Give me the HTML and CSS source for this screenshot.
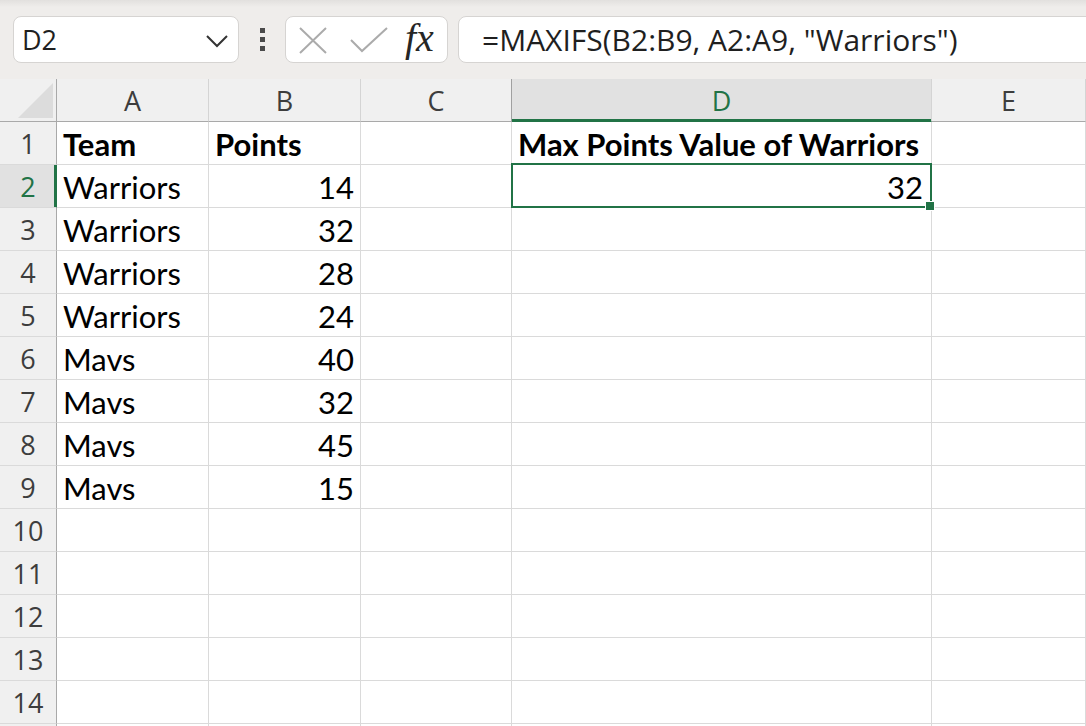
FILE: index.html
```html
<!DOCTYPE html>
<html lang="en">
<head>
<meta charset="utf-8">
<title>MAXIFS</title>
<link rel="stylesheet" href="styles.css">
</head>
<body>
<div class="toolbar">
  <div class="namebox">
    <span class="name">D2</span>
    <svg class="chev" width="24" height="14" viewBox="0 0 24 14"><path d="M2 2 L12 12 L22 2" fill="none" stroke="#333" stroke-width="2"/></svg>
  </div>
  <div class="dots"><i></i><i></i><i></i></div>
  <div class="fxbox">
    <svg class="ico-x" width="30" height="27" viewBox="0 0 30 27"><path d="M2 1 L28 26 M28 1 L2 26" fill="none" stroke="#ababab" stroke-width="2"/></svg>
    <svg class="ico-check" width="38" height="26" viewBox="0 0 38 26"><path d="M1 13 L12 24 L37 1" fill="none" stroke="#ababab" stroke-width="2"/></svg>
    <span class="fx">fx</span>
  </div>
  <div class="formula">=MAXIFS(B2:B9, A2:A9, "Warriors")</div>
</div>

<div class="sheet">
  <div class="corner"><svg width="57" height="43" viewBox="0 0 57 43"><polygon points="53,4 53,39 18,39" fill="#dcdcdc"/></svg></div>
  <div class="ch">A</div><div class="ch">B</div><div class="ch pre-sel">C</div><div class="ch sel">D</div><div class="ch">E</div>

  <div class="rh">1</div><div class="c b">Team</div><div class="c b">Points</div><div class="c"></div><div class="c b">Max Points Value of Warriors</div><div class="c"></div>
  <div class="rh sel">2</div><div class="c">Warriors</div><div class="c n">14</div><div class="c"></div><div class="c n active">32<span class="selbox"></span><span class="handle"></span></div><div class="c"></div>
  <div class="rh">3</div><div class="c">Warriors</div><div class="c n">32</div><div class="c"></div><div class="c"></div><div class="c"></div>
  <div class="rh">4</div><div class="c">Warriors</div><div class="c n">28</div><div class="c"></div><div class="c"></div><div class="c"></div>
  <div class="rh">5</div><div class="c">Warriors</div><div class="c n">24</div><div class="c"></div><div class="c"></div><div class="c"></div>
  <div class="rh">6</div><div class="c">Mavs</div><div class="c n">40</div><div class="c"></div><div class="c"></div><div class="c"></div>
  <div class="rh">7</div><div class="c">Mavs</div><div class="c n">32</div><div class="c"></div><div class="c"></div><div class="c"></div>
  <div class="rh">8</div><div class="c">Mavs</div><div class="c n">45</div><div class="c"></div><div class="c"></div><div class="c"></div>
  <div class="rh">9</div><div class="c">Mavs</div><div class="c n">15</div><div class="c"></div><div class="c"></div><div class="c"></div>
  <div class="rh">10</div><div class="c"></div><div class="c"></div><div class="c"></div><div class="c"></div><div class="c"></div>
  <div class="rh">11</div><div class="c"></div><div class="c"></div><div class="c"></div><div class="c"></div><div class="c"></div>
  <div class="rh">12</div><div class="c"></div><div class="c"></div><div class="c"></div><div class="c"></div><div class="c"></div>
  <div class="rh">13</div><div class="c"></div><div class="c"></div><div class="c"></div><div class="c"></div><div class="c"></div>
  <div class="rh">14</div><div class="c"></div><div class="c"></div><div class="c"></div><div class="c"></div><div class="c"></div>
  <div class="rh"></div><div class="c"></div><div class="c"></div><div class="c"></div><div class="c"></div><div class="c"></div>
</div>
</body>
</html>
```
FILE: styles.css
```css
* { box-sizing: border-box; }
html, body {
  margin: 0;
  padding: 0;
  width: 1086px;
  height: 726px;
  overflow: hidden;
  background: #ffffff;
}
body {
  font-family: "Open Sans", "Noto Sans", sans-serif;
  color: #000;
}

/* ---------- formula bar ---------- */
.toolbar {
  height: 79px;
  display: flex;
  align-items: flex-start;
  padding: 16px 0 0 13px;
  background: linear-gradient(#e2e0de 0px, #efedeb 7px, #efedeb 100%);
  overflow: hidden;
}
.namebox {
  width: 226px;
  height: 47px;
  background: #fff;
  border: 1px solid #d6d4d2;
  border-radius: 8px;
  display: flex;
  align-items: center;
  justify-content: space-between;
  padding: 0 9px 0 8px;
}
.name {
  font-size: 27px;
  line-height: 44px;
  color: #1f1f1f;
}
.chev { margin-top: 2px; }
.dots {
  margin-left: 21px;
  margin-top: 12px;
  display: flex;
  flex-direction: column;
  gap: 4px;
}
.dots i {
  display: block;
  width: 5px;
  height: 5px;
  background: #4a4a4a;
}
.fxbox {
  margin-left: 20px;
  width: 163px;
  height: 47px;
  background: #fff;
  border: 1px solid #d6d4d2;
  border-radius: 8px;
  display: flex;
  align-items: center;
  padding: 0 0 0 12px;
}
.ico-x { margin-top: 1px; }
.ico-check { margin-left: 22px; }
.fx {
  font-family: "Liberation Serif", "DejaVu Serif", serif;
  font-style: italic;
  font-size: 40px;
  line-height: 44px;
  color: #262626;
  margin-left: 17px;
  margin-top: -3px;
}
.formula {
  flex: 1;
  margin-left: 10px;
  margin-right: -20px;
  height: 47px;
  background: #fff;
  border: 1px solid #d6d4d2;
  border-radius: 8px;
  padding-left: 23px;
  font-size: 30px;
  line-height: 46px;
  color: #1f1f1f;
  white-space: nowrap;
}

/* ---------- grid ---------- */
.sheet {
  display: grid;
  grid-template-columns: 57px 152px 152px 151px 420px 1fr;
  grid-auto-rows: 43px;
}
.corner, .ch, .rh, .c {
  border-right: 1px solid #dadada;
  border-bottom: 1px solid #dadada;
}
.corner {
  background: #f0f0f0;
  border-right-color: #a9a9a9;
  border-bottom-color: #a9a9a9;
}
.corner svg { display: block; }
.ch {
  background: #f0f0f0;
  border-right-color: #d4d4d4;
  border-bottom-color: #a9a9a9;
  text-align: center;
  font-size: 27px;
  line-height: 40px;
  padding-top: 2px;
  color: #3d3d3d;
}
.ch.pre-sel { border-right-color: #a0a0a0; }
.ch.sel {
  background: #e1e1e1;
  color: #217346;
  border-bottom-color: #217346;
  box-shadow: inset 0 -2px 0 #217346;
}
.rh {
  background: #f0f0f0;
  border-right-color: #a9a9a9;
  border-bottom-color: #dadada;
  text-align: center;
  font-size: 27px;
  line-height: 40px;
  padding-top: 2px;
  color: #3d3d3d;
}
.rh.sel {
  background: #e1e1e1;
  color: #217346;
  border-right-color: #217346;
  box-shadow: inset -2px 0 0 #217346;
}
.c {
  font-family: "Lato", "Liberation Sans", sans-serif;
  font-size: 31px;
  line-height: 40px;
  padding: 2px 6px 0 6px;
  white-space: nowrap;
  overflow: visible;
  color: #000;
}
.c.b { font-weight: 700; }
.c.n { text-align: right; }
.c.active {
  position: relative;
  padding-right: 8px;
}
.selbox {
  position: absolute;
  left: -1px;
  top: -2px;
  right: -1px;
  bottom: -1px;
  border: 2px solid #217346;
  pointer-events: none;
}
.handle {
  position: absolute;
  left: 414px;
  top: 37px;
  width: 8px;
  height: 8px;
  background: #217346;
  outline: 1px solid #ffffff;
}
```
